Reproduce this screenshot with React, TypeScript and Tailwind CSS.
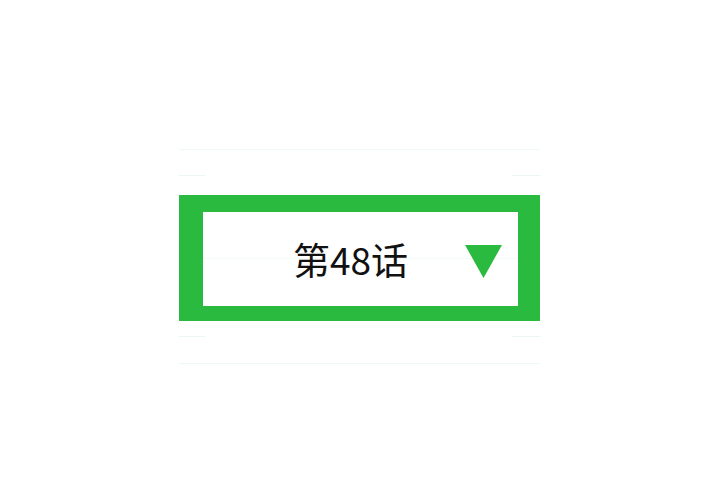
export default function App() {
  return (
    <div className="w-[720px] h-[500px] bg-white overflow-hidden" style={{ fontFamily: '"Noto Sans CJK SC", "Noto Sans", sans-serif' }}>
      <div className="w-[361px] ml-[179px] pt-[149px] flex flex-col">
        <div className="h-px bg-[#eefaf1]" />
        <div className="h-[26px] flex items-end justify-between">
          <div className="w-[26px] h-px bg-[#ecf8ef]" />
          <div className="w-[28px] h-px bg-[#ecf8ef]" />
        </div>
        <div className="h-[19px]" />
        <div className="h-[126px] border-[#2aba40] border-l-[24px] border-r-[22px] border-t-[17px] border-b-[15px] flex flex-col justify-center relative">
          <div className="absolute left-0 right-0 top-[46px] h-px bg-[#f2fbf4]" />
          <div className="flex items-center justify-between pl-[90px] pr-[16px] relative">
            <span className="text-[37px] leading-none text-[#111]">第48话</span>
            <svg className="mt-[4px]" width="37" height="33" viewBox="0 0 37 33">
              <polygon points="0,0 37,0 18.5,33" fill="#2aba40" />
            </svg>
          </div>
        </div>
        <div className="h-[16px] flex items-end justify-between">
          <div className="w-[26px] h-px bg-[#ecf8ef]" />
          <div className="w-[28px] h-px bg-[#ecf8ef]" />
        </div>
        <div className="h-[26px]" />
        <div className="h-px bg-[#eefaf1]" />
      </div>
    </div>
  );
}
